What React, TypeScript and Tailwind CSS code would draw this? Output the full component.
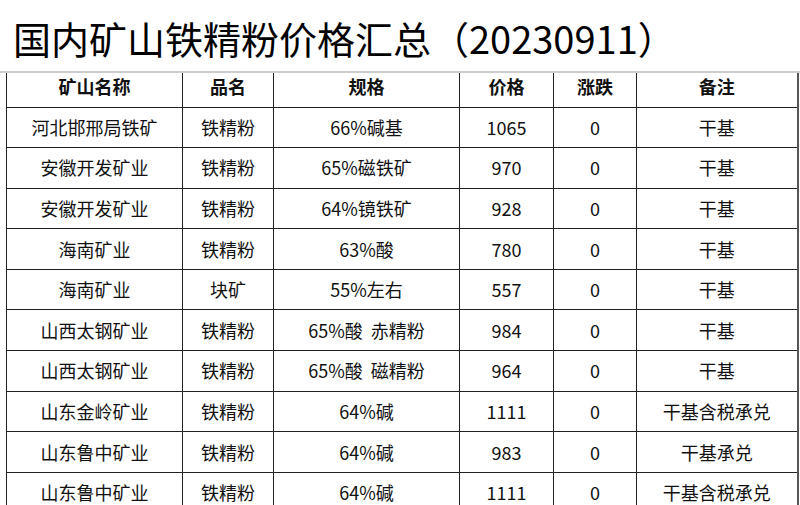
import React from "react";

type Row = {
  mine: string;
  product: string;
  spec: string;
  price: string;
  change: string;
  note: string;
};

const rows: Row[] = [
  { mine: "河北邯邢局铁矿", product: "铁精粉", spec: "66%碱基", price: "1065", change: "0", note: "干基" },
  { mine: "安徽开发矿业", product: "铁精粉", spec: "65%磁铁矿", price: "970", change: "0", note: "干基" },
  { mine: "安徽开发矿业", product: "铁精粉", spec: "64%镜铁矿", price: "928", change: "0", note: "干基" },
  { mine: "海南矿业", product: "铁精粉", spec: "63%酸", price: "780", change: "0", note: "干基" },
  { mine: "海南矿业", product: "块矿", spec: "55%左右", price: "557", change: "0", note: "干基" },
  { mine: "山西太钢矿业", product: "铁精粉", spec: "65%酸  赤精粉", price: "984", change: "0", note: "干基" },
  { mine: "山西太钢矿业", product: "铁精粉", spec: "65%酸  磁精粉", price: "964", change: "0", note: "干基" },
  { mine: "山东金岭矿业", product: "铁精粉", spec: "64%碱", price: "1111", change: "0", note: "干基含税承兑" },
  { mine: "山东鲁中矿业", product: "铁精粉", spec: "64%碱", price: "983", change: "0", note: "干基承兑" },
  { mine: "山东鲁中矿业", product: "铁精粉", spec: "64%碱", price: "1111", change: "0", note: "干基含税承兑" },
];

const headers = ["矿山名称", "品名", "规格", "价格", "涨跌", "备注"];

export default function App() {
  return (
    <div
      className="w-[800px] h-[505px] overflow-hidden bg-white text-[#111]"
      style={{ fontFamily: '"Noto Sans CJK SC", "Noto Sans", sans-serif' }}
    >
      <div className="h-[71px] flex items-center pl-[13px] pt-[5px] text-[38px] leading-none text-black">
        国内矿山铁精粉价格汇总（20230911）
      </div>
      <div className="h-[2px] bg-[#cdcdcd]" />
      <table className="ml-[6px] w-[791px] table-fixed border-collapse text-[18px]">
        <colgroup>
          <col className="w-[176px]" />
          <col className="w-[91px]" />
          <col className="w-[186px]" />
          <col className="w-[94px]" />
          <col className="w-[83px]" />
          <col className="w-[161px]" />
        </colgroup>
        <thead>
          <tr className="h-[34px]">
            {headers.map((h, i) => (
              <th
                key={h}
                className={
                  "border-x border-b border-[#222] font-bold text-center align-middle pb-[6px] " +
                  (i === 5 ? "border-r-2 border-r-[#555]" : "")
                }
              >
                {h}
              </th>
            ))}
          </tr>
        </thead>
        <tbody>
          {rows.map((r, idx) => (
            <tr key={idx} className="h-[40.6px]">
              <td className="border border-[#222] text-center">{r.mine}</td>
              <td className="border border-[#222] text-center">{r.product}</td>
              <td className="border border-[#222] text-center whitespace-pre">{r.spec}</td>
              <td className="border border-[#222] text-center">{r.price}</td>
              <td className="border border-[#222] text-center">{r.change}</td>
              <td className="border border-[#222] border-r-2 border-r-[#555] text-center">{r.note}</td>
            </tr>
          ))}
        </tbody>
      </table>
    </div>
  );
}
